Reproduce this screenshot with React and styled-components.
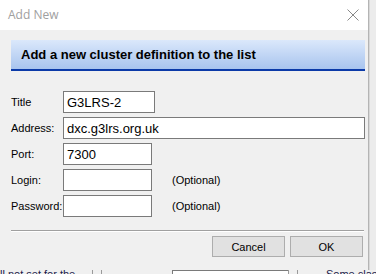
import React from 'react';
import styled, { createGlobalStyle } from 'styled-components';

const GlobalStyle = createGlobalStyle`
  html, body {
    margin: 0;
    padding: 0;
    background: #f0f0f0;
    overflow: hidden;
  }
`;

const Screen = styled.div`
  width: 376px;
  height: 274px;
  display: flex;
  flex-direction: column;
  font-family: 'Liberation Sans', Arial, sans-serif;
`;

const TopRow = styled.div`
  display: flex;
  height: 270px;
`;

const Dialog = styled.div`
  width: 368px;
  display: flex;
  flex-direction: column;
  background: #f0f0f0;
  border-right: 1px solid #b4b4b4;
`;

const Gutter = styled.div`
  flex: 1;
  background: #ececec;
  border-left: 1px solid #d8d8d8;
`;

const TitleBar = styled.div`
  height: 30px;
  background: #fff;
  display: flex;
  align-items: center;
  justify-content: space-between;
  padding: 0 9px 0 8px;
  flex-shrink: 0;
`;

const Caption = styled.span`
  font-family: 'Open Sans', 'Liberation Sans', sans-serif;
  font-size: 12px;
  color: #a0a0a0;
  margin-top: -1px;
`;

const Body = styled.div`
  padding: 10px 0 0 11px;
  display: flex;
  flex-direction: column;
`;

const Banner = styled.div`
  width: 354px;
  height: 31px;
  box-sizing: border-box;
  background: linear-gradient(#dbe8fb, #a8c4ee);
  border-bottom: 2px solid #0b3aa8;
  display: flex;
  align-items: center;
  padding-left: 10px;
  font-weight: bold;
  font-size: 13px;
  color: #000;
`;

const Form = styled.div`
  display: grid;
  grid-template-columns: 52px auto 1fr;
  grid-auto-rows: 22px;
  row-gap: 4px;
  align-items: center;
  margin-top: 20px;
`;

const Label = styled.label`
  font-size: 11px;
  color: #000;
`;

const Field = styled.div`
  width: ${p => p.w}px;
  height: 22px;
  box-sizing: border-box;
  background: #fff;
  border: 1px solid #7a7a7a;
  font-size: 13px;
  color: #000;
  display: flex;
  align-items: center;
  padding-left: 3px;
  grid-column: ${p => (p.wide ? '2 / 4' : 'auto')};
`;

const Hint = styled.span`
  font-size: 11px;
  color: #000;
  padding-left: 17px;
`;

const Rule = styled.div`
  width: 353px;
  height: 1px;
  margin-top: 13px;
  background: #a0a0a0;
  border-bottom: 1px solid #fff;
`;

const Buttons = styled.div`
  display: flex;
  justify-content: flex-end;
  gap: 5px;
  width: 352px;
  margin-top: 4px;
`;

const Button = styled.button`
  width: 73px;
  height: 21px;
  box-sizing: border-box;
  background: #e1e1e1;
  border: 1px solid #adadad;
  font-family: 'Liberation Sans', Arial, sans-serif;
  font-size: 11px;
  color: #000;
  padding: 0;
`;

const Backdrop = styled.div`
  height: 4px;
  display: flex;
  align-items: flex-start;
  background: #f0f0f0;
  overflow: hidden;
  font-size: 11px;
  line-height: 11px;
  color: #1b1b4a;
`;

const BackText = styled.span`
  width: ${p => p.w}px;
  margin-top: -1px;
  white-space: nowrap;
  overflow: hidden;
`;

const BackLine = styled.span`
  width: ${p => p.w}px;
  height: 4px;
  border-left: 1px solid #9a9a9a;
`;

const BackBox = styled.span`
  width: 115px;
  height: 4px;
  border-top: 1px solid #7a7a7a;
  border-left: 1px solid #7a7a7a;
  background: #fff;
`;

const fields = [
  { label: 'Title', value: 'G3LRS-2', w: 92 },
  { label: 'Address:', value: 'dxc.g3lrs.org.uk', w: 302, wide: true },
  { label: 'Port:', value: '7300', w: 89 },
  { label: 'Login:', value: '', w: 89, hint: '(Optional)' },
  { label: 'Password:', value: '', w: 89, hint: '(Optional)' },
];

const CloseIcon = () => (
  <svg width="12" height="12" viewBox="0 0 12 12">
    <path d="M0.5 0.5 L11.5 11.5 M11.5 0.5 L0.5 11.5" stroke="#888" strokeWidth="1" />
  </svg>
);

const App = () => (
  <>
    <GlobalStyle />
    <Screen>
      <TopRow>
        <Dialog>
          <TitleBar>
            <Caption>Add New</Caption>
            <CloseIcon />
          </TitleBar>
          <Body>
            <Banner>Add a new cluster definition to the list</Banner>
            <Form>
              {fields.map(f => (
                <React.Fragment key={f.label}>
                  <Label>{f.label}</Label>
                  <Field w={f.w} wide={f.wide}>{f.value}</Field>
                  {!f.wide && <Hint>{f.hint}</Hint>}
                </React.Fragment>
              ))}
            </Form>
            <Rule />
            <Buttons>
              <Button>Cancel</Button>
              <Button>OK</Button>
            </Buttons>
          </Body>
        </Dialog>
        <Gutter />
      </TopRow>
      <Backdrop>
        <BackText w={92}>ll not set for the</BackText>
        <BackLine w={8} />
        <BackLine w={70} />
        <BackBox />
        <BackLine w={8} />
        <BackLine w={28} />
        <BackText w={50}>Some clas</BackText>
      </Backdrop>
    </Screen>
  </>
);

export default App;
